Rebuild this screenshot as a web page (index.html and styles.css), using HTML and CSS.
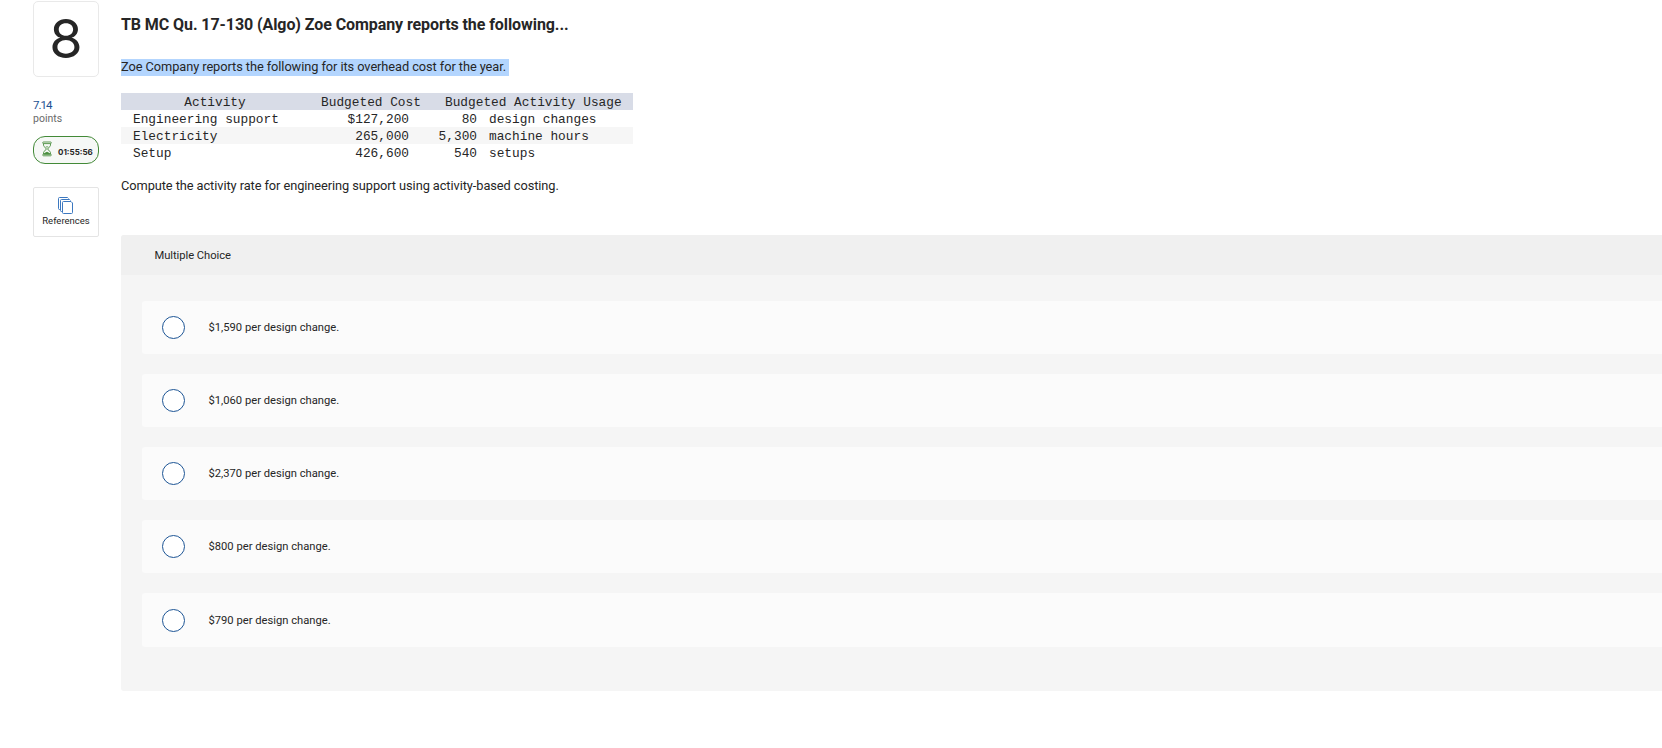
FILE: index.html
```html
<!DOCTYPE html>
<html lang="en">
<head>
    <meta charset="UTF-8">
    <meta name="viewport" content="width=device-width, initial-scale=1.0">
    <title>Question 8</title>
    <link rel="stylesheet" href="styles.css">
</head>
<body>
    <div class="page">
        <aside class="sidebar">
            <div class="question-number">8</div>
            <div class="points">
                <div class="points-value">7.14</div>
                <div class="points-label">points</div>
            </div>
            <div class="timer">
                <svg class="timer-icon" width="10" height="16" viewBox="0 0 10 16" fill="none" stroke="#4b8f40" stroke-width="0.9">
                    <rect x="0.700" y="1" width="8.600" height="1.6" rx="0.8" />
                    <rect x="0.700" y="13.2" width="8.600" height="1.6" rx="0.8" />
                    <path d="M1.500 2.600v1.600c0 2 2.800 2.400 2.800 3.800S1.500 9.800 1.500 11.600v1.600M8.500 2.600v1.600c0 2-2.800 2.400-2.800 3.800s2.800 1.800 2.800 3.600v1.600" />
                    <path d="M3.500 5.400h3L5 6.800zM1.800 13.400c0-1.600 2-2 3.200-2.600 1.200.6 3.200 1 3.200 2.600z" fill="#4b8f40" stroke="none" />
                </svg>
                <span class="timer-text">01:55:56</span>
            </div>
            <button class="references">
                <svg width="16" height="17" viewBox="0 0 16 17" fill="none" stroke="#3c78c0">
                    <path d="M2.500 12.500h-1a1 1 0 0 1-1-1v-10a1 1 0 0 1 1-1h8l1 1" />
                    <path d="M4.500 14.500h-1a1 1 0 0 1-1-1v-10a1 1 0 0 1 1-1h8l1 1" />
                    <path d="M5.500 4.500h7.500l1.500 1.500v9.500a1 1 0 0 1-1 1h-8a1 1 0 0 1-1-1v-10a1 1 0 0 1 1-1z" />
                </svg>
                <span>References</span>
            </button>
        </aside>

        <main class="question">
            <h1>TB MC Qu. 17-130 (Algo) Zoe Company reports the following...</h1>
            <p class="intro"><span class="selected">Zoe Company reports the following for its overhead cost for the year.</span></p>

            <table class="costs">
                <colgroup>
                    <col class="col-activity">
                    <col class="col-cost">
                    <col class="col-amount">
                    <col class="col-unit">
                </colgroup>
                <thead>
                    <tr><th>Activity</th><th>Budgeted Cost</th><th colspan="2">Budgeted Activity Usage</th></tr>
                </thead>
                <tbody>
                    <tr><td>Engineering support</td><td class="cost">$127,200</td><td class="amount">80</td><td class="unit">design changes</td></tr>
                    <tr class="shaded"><td>Electricity</td><td class="cost">265,000</td><td class="amount">5,300</td><td class="unit">machine hours</td></tr>
                    <tr><td>Setup</td><td class="cost">426,600</td><td class="amount">540</td><td class="unit">setups</td></tr>
                </tbody>
            </table>

            <p class="prompt">Compute the activity rate for engineering support using activity-based costing.</p>

            <section class="answers">
                <h2>Multiple Choice</h2>
                <div class="options">
                    <label class="option"><input type="radio" name="answer"><span>$1,590 per design change.</span></label>
                    <label class="option"><input type="radio" name="answer"><span>$1,060 per design change.</span></label>
                    <label class="option"><input type="radio" name="answer"><span>$2,370 per design change.</span></label>
                    <label class="option"><input type="radio" name="answer"><span>$800 per design change.</span></label>
                    <label class="option"><input type="radio" name="answer"><span>$790 per design change.</span></label>
                </div>
            </section>
        </main>
    </div>
</body>
</html>
```
FILE: styles.css
```css
* {
    box-sizing: border-box;
}

body {
    margin: 0;
    background-color: #fff;
    color: #262626;
    font-family: Roboto, "Liberation Sans", sans-serif;
}

.page {
    display: flex;
    gap: 22px;
    padding: 1px 0 0 33px;
}

.sidebar {
    width: 66px;
    flex-shrink: 0;
}

.question-number {
    height: 76px;
    border: 1px solid #e9e9e9;
    border-radius: 5px;
    font-family: Inter, sans-serif;
    font-size: 54px;
    line-height: 74px;
    text-align: center;
}

.points {
    margin-top: 22px;
    line-height: 13px;
}

.points-value {
    color: #1d5193;
    font-size: 11.5px;
    letter-spacing: -1px;
}

.points-label {
    color: #6a6a6a;
    font-size: 10.5px;
}

.timer {
    display: flex;
    align-items: center;
    height: 28px;
    margin-top: 11px;
    padding-left: 8px;
    border: 1px solid #438a38;
    border-radius: 12px;
    background-color: #f6f8f6;
}

.timer-icon {
    flex-shrink: 0;
    margin-top: -2px;
}

.timer-text {
    margin: 4px 0 0 6px;
    font-family: Inter, sans-serif;
    font-size: 8px;
    font-weight: bold;
}

.references {
    display: flex;
    flex-direction: column;
    align-items: center;
    gap: 1px;
    width: 66px;
    height: 50px;
    margin-top: 23px;
    padding: 9px 0 0;
    border: 1px solid #e4e4e4;
    border-radius: 2px;
    background-color: #fff;
    color: #262626;
    font-family: inherit;
    font-size: 9.5px;
    line-height: 12px;
}

.question {
    flex: 1;
    min-width: 0;
}

h1 {
    margin: 14px 0 0;
    font-size: 16px;
    letter-spacing: -0.08px;
    line-height: 20px;
}

.intro,
.prompt {
    margin: 0;
    font-size: 12.8px;
    letter-spacing: -0.07px;
    line-height: 15px;
}

.intro {
    margin-top: 24px;
}

.selected {
    display: inline-block;
    padding: 0 3px 2px 0;
    background-color: #b3d5fe;
}

.costs {
    width: 512px;
    margin-top: 17px;
    border-collapse: collapse;
    table-layout: fixed;
    font-family: "Liberation Mono", "Courier New", monospace;
    font-size: 12.8px;
    line-height: 15px;
}

.col-activity {
    width: 188px;
}

.col-cost {
    width: 124px;
}

.col-amount {
    width: 56px;
}

.costs th,
.costs td {
    padding: 2px 12px 0;
    font-weight: normal;
    white-space: nowrap;
}

.costs th {
    background-color: #d8dce7;
}

.costs .shaded {
    background-color: #f6f6f6;
}

.costs .cost {
    padding-right: 24px;
    text-align: right;
}

.costs .amount {
    padding-left: 0;
    text-align: right;
}

.costs .unit {
    padding-left: 0;
}

.prompt {
    margin-top: 17px;
}

.answers {
    height: 456px;
    margin-top: 42px;
    border-radius: 3px 0 0 3px;
    background-color: #f5f5f5;
    overflow: hidden;
}

h2 {
    margin: 0;
    padding: 1px 0 0 33.5px;
    background-color: #f0f0f0;
    font-size: 11.2px;
    font-weight: normal;
    letter-spacing: -0.05px;
    line-height: 39px;
}

.options {
    display: flex;
    flex-direction: column;
    gap: 20px;
    padding: 26px 0 0 21px;
}

.option {
    display: flex;
    align-items: center;
    gap: 23.5px;
    height: 53px;
    padding-left: 20px;
    border-radius: 3px 0 0 3px;
    background-color: #fbfbfb;
    font-size: 11.2px;
}

.option:last-child {
    height: 54px;
}

.option input {
    width: 23px;
    height: 23px;
    margin: 0;
    border: 1px solid #1d5595;
    border-radius: 50%;
    background-color: #fff;
    appearance: none;
}
```
